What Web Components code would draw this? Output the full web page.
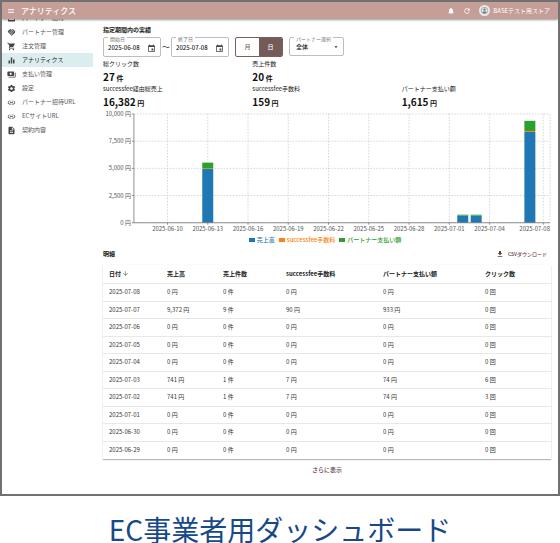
<!DOCTYPE html>
<html lang="ja">
<head>
<meta charset="utf-8">
<meta name="viewport" content="width=device-width, initial-scale=1">
<title>アナリティクス</title>
<style>
    body { margin: 0; background: #fff; color: #333; font-family: "Noto Sans CJK JP", "Noto Sans", sans-serif; font-size: 6px; line-height: 10px; }
</style>
</head>
<body>
<analytics-page></analytics-page>

<script>
const ICONS = {
    menu: '<path d="M3 18h18v-2H3v2zm0-5h18v-2H3v2zm0-7v2h18V6H3z"/>',
    bell: '<path d="M12 22c1.1 0 2-.9 2-2h-4c0 1.1.89 2 2 2zm6-6v-5c0-3.07-1.64-5.64-4.5-6.32V4c0-.83-.67-1.5-1.5-1.5s-1.5.67-1.5 1.5v.68C7.63 5.36 6 7.92 6 11v5l-2 2v1h16v-1l-2-2z"/>',
    refresh: '<path d="M17.65 6.35C16.2 4.9 14.21 4 12 4c-4.42 0-7.99 3.58-7.99 8s3.57 8 7.99 8c3.73 0 6.84-2.55 7.73-6h-2.08c-.82 2.33-3.04 4-5.65 4-3.31 0-6-2.69-6-6s2.69-6 6-6c1.66 0 3.14.69 4.22 1.78L13 11h7V4l-2.35 2.35z"/>',
    avatar: '<circle cx="12" cy="12" r="12" fill="#e9ebed"/><circle cx="12" cy="12" r="7" fill="none" stroke="#8b8e91" stroke-width="1.6"/><circle cx="12" cy="10" r="2.6" fill="#76797d"/><path d="M7.5 16.5c1-2.2 2.6-3 4.5-3s3.5.8 4.5 3c-2.5 2.4-6.5 2.4-9 0z" fill="#76797d"/>',
    invite: '<path d="M3 4h18v16H3z M5 6v10h14V6z" fill-rule="evenodd"/>',
    handshake: '<path d="M16.48 10.41c-.39.39-1.04.39-1.43 0l-4.47-4.46-7.05 7.04-.66-.63c-1.17-1.17-1.17-3.07 0-4.24l4.24-4.24c1.17-1.17 3.07-1.17 4.24 0L16.48 9c.39.39.39 1.02 0 1.41z M17.18 8.29c.78.78.78 2.05 0 2.83-1.27 1.27-2.61.22-2.83 0l-3.76-3.76-5.57 5.57c-.39.39-.39 1.02 0 1.41s1.02.39 1.42 0l4.62-4.62.71.71-4.62 4.62c-.39.39-.39 1.02 0 1.41s1.02.39 1.42 0l4.62-4.62.71.71-4.62 4.62c-.39.39-.39 1.02 0 1.41s1.02.39 1.41 0l4.62-4.62.71.71-4.62 4.62c-.39.39-.39 1.02 0 1.41s1.02.39 1.41 0l8.32-8.34c1.17-1.17 1.17-3.07 0-4.24l-4.24-4.24c-1.15-1.15-3.01-1.17-4.18-.06z"/>',
    cart: '<path d="M7 18c-1.1 0-1.99.9-1.99 2S5.9 22 7 22s2-.9 2-2-.9-2-2-2zM1 2v2h2l3.6 7.59-1.35 2.45c-.16.28-.25.61-.25.96 0 1.1.9 2 2 2h12v-2H7.42c-.14 0-.25-.11-.25-.25l.03-.12.9-1.63h7.45c.75 0 1.41-.41 1.75-1.03l3.58-6.49c.08-.14.12-.31.12-.48 0-.55-.45-1-1-1H5.21l-.94-2H1zm16 16c-1.1 0-1.99.9-1.99 2s.89 2 1.99 2 2-.9 2-2-.9-2-2-2z"/>',
    chart: '<path d="M10 20h4V4h-4v16zm-6 0h4v-8H4v8zM16 9v11h4V9h-4z"/>',
    payments: '<path d="M19 14V6c0-1.1-.9-2-2-2H3c-1.1 0-2 .9-2 2v8c0 1.1.9 2 2 2h14c1.1 0 2-.9 2-2zm-9-1c-1.66 0-3-1.34-3-3s1.34-3 3-3 3 1.34 3 3-1.34 3-3 3zm13-6v11c0 1.1-.9 2-2 2H4v-2h17V7h2z"/>',
    settings: '<path d="M19.14 12.94c.04-.3.06-.61.06-.94 0-.32-.02-.64-.07-.94l2.03-1.58c.18-.14.23-.41.12-.61l-1.92-3.32c-.12-.22-.37-.29-.59-.22l-2.39.96c-.5-.38-1.03-.7-1.62-.94l-.36-2.54c-.04-.24-.24-.41-.48-.41h-3.84c-.24 0-.43.17-.47.41l-.36 2.54c-.59.24-1.13.57-1.62.94l-2.39-.96c-.22-.08-.47 0-.59.22L2.74 8.87c-.12.21-.08.47.12.61l2.03 1.58c-.05.3-.09.63-.09.94s.02.64.07.94l-2.03 1.58c-.18.14-.23.41-.12.61l1.92 3.32c.12.22.37.29.59.22l2.39-.96c.5.38 1.03.7 1.62.94l.36 2.54c.05.24.24.41.48.41h3.84c.24 0 .44-.17.47-.41l.36-2.54c.59-.24 1.13-.56 1.62-.94l2.39.96c.22.08.47 0 .59-.22l1.92-3.32c.12-.22.07-.47-.12-.61l-2.01-1.58zM12 15.6c-1.98 0-3.6-1.62-3.6-3.6s1.62-3.6 3.6-3.6 3.6 1.62 3.6 3.6-1.62 3.6-3.6 3.6z"/>',
    link: '<path d="M3.9 12c0-1.71 1.39-3.1 3.1-3.1h4V7H7c-2.76 0-5 2.24-5 5s2.24 5 5 5h4v-1.9H7c-1.71 0-3.1-1.39-3.1-3.1zM8 13h8v-2H8v2zm9-6h-4v1.9h4c1.71 0 3.1 1.39 3.1 3.1s-1.39 3.1-3.1 3.1h-4V17h4c2.76 0 5-2.24 5-5s-2.24-5-5-5z"/>',
    document: '<path d="M14 2H6c-1.1 0-1.99.9-1.99 2L4 20c0 1.1.89 2 1.99 2H18c1.1 0 2-.9 2-2V8l-6-6zm2 16H8v-2h8v2zm0-4H8v-2h8v2zm-3-5V3.5L18.5 9H13z"/>',
    event: '<path d="M17 12h-5v5h5v-5zM16 1v2H8V1H6v2H5c-1.11 0-1.99.9-1.99 2L3 19c0 1.1.89 2 2 2h14c1.1 0 2-.9 2-2V5c0-1.1-.9-2-2-2h-1V1h-2zm3 18H5V8h14v11z"/>',
    dropdown: '<path d="M7 10l5 5 5-5z"/>',
    download: '<path d="M5 20h14v-2H5v2zM19 9h-4V3H9v6H5l7 7 7-7z"/>',
    arrowDown: '<path d="M20 12l-1.41-1.41L13 16.17V4h-2v12.17l-5.58-5.59L4 12l8 8 8-8z"/>'
};

class AppIcon extends HTMLElement {
    constructor() {
        super();
        this.attachShadow({ mode: 'open' });
    }

    connectedCallback() {
        this.shadowRoot.innerHTML = `
            <style>
                :host { display: block; flex: none; width: var(--icon-size, 8px); height: var(--icon-size, 8px); }
                svg { display: block; width: 100%; height: 100%; fill: currentColor; }
            </style>
            <svg viewBox="0 0 24 24" aria-hidden="true">${ICONS[this.getAttribute('name')]}</svg>
        `;
    }
}

class AppHeader extends HTMLElement {
    constructor() {
        super();
        this.attachShadow({ mode: 'open' });
        this.shadowRoot.innerHTML = `
            <style>
                :host { display: flex; align-items: center; height: 17px; padding: 0 8px 0 5px; background: #c49e97; color: #fff; box-shadow: 0 1px 2px #0006; position: relative; z-index: 1; }
                button { all: unset; display: flex; cursor: pointer; }
                h1 { flex: 1; margin: 0 0 0 6px; font-size: 8px; line-height: 12px; font-weight: 500; }
                .actions { display: flex; align-items: center; gap: 8px; }
                .account { gap: 3px; align-items: center; white-space: nowrap; }
                .account app-icon { --icon-size: 11px; }
            </style>
            <button aria-label="menu"><app-icon name="menu"></app-icon></button>
            <h1><slot name="title"></slot></h1>
            <div class="actions">
                <button aria-label="notifications"><app-icon name="bell"></app-icon></button>
                <button aria-label="refresh"><app-icon name="refresh"></app-icon></button>
                <button class="account"><app-icon name="avatar"></app-icon><slot name="account"></slot></button>
            </div>
        `;
    }
}

class NavItem extends HTMLElement {
    constructor() {
        super();
        this.attachShadow({ mode: 'open' });
    }

    connectedCallback() {
        this.shadowRoot.innerHTML = `
            <style>
                :host { display: block; color: #555; }
                :host([active]) { background: #dcedef; color: #222; }
                a { display: flex; align-items: center; gap: 6px; height: 14px; padding-left: 5px; color: inherit; text-decoration: none; }
                app-icon { --icon-size: 9px; color: #444; }
            </style>
            <a href="#"><app-icon name="${this.getAttribute('icon')}"></app-icon><slot></slot></a>
        `;
    }
}

class SideNav extends HTMLElement {
    constructor() {
        super();
        this.attachShadow({ mode: 'open' });
        // the list is scrolled a little, so its first entry runs under the header
        this.shadowRoot.innerHTML = `
            <style>
                :host { display: block; overflow: hidden; }
                nav { margin-top: -8px; }
            </style>
            <nav><slot></slot></nav>
        `;
    }
}

class DateField extends HTMLElement {
    constructor() {
        super();
        this.attachShadow({ mode: 'open' });
    }

    connectedCallback() {
        this.shadowRoot.innerHTML = `
            <style>
                :host { display: flex; align-items: center; position: relative; box-sizing: border-box; width: 58px; height: 20px; padding: 2px 4px 0 4px; border: 1px solid #bdbdbd; border-radius: 2px; }
                label { position: absolute; top: -3px; left: 4px; padding: 0 2px; background: #fff; color: #777; font-size: 5px; line-height: 8px; }
                input { all: unset; flex: 1; min-width: 0; height: 10px; color: #222; font-weight: 500; }
                button { all: unset; color: #444; cursor: pointer; }
                app-icon { --icon-size: 9px; }
            </style>
            <label for="date">${this.getAttribute('label')}</label>
            <input id="date" type="text" value="${this.getAttribute('value')}">
            <button aria-label="calendar"><app-icon name="event"></app-icon></button>
        `;
    }
}

class SelectField extends HTMLElement {
    constructor() {
        super();
        this.attachShadow({ mode: 'open' });
    }

    connectedCallback() {
        this.shadowRoot.innerHTML = `
            <style>
                :host { display: flex; align-items: center; position: relative; box-sizing: border-box; width: 55px; height: 19px; border: 1px solid #bdbdbd; border-radius: 2px; }
                label { position: absolute; top: -3px; left: 4px; padding: 0 2px; background: #fff; color: #777; font-size: 5px; line-height: 8px; white-space: nowrap; }
                select { all: unset; flex: 1; height: 10px; padding: 1px 0 0 6px; color: #222; font-size: 6px; line-height: 10px; font-weight: 500; }
                app-icon { position: absolute; right: 3px; top: 5px; pointer-events: none; }
            </style>
            <label for="choice">${this.getAttribute('label')}</label>
            <select id="choice"><option>${this.getAttribute('value')}</option></select>
            <app-icon name="dropdown"></app-icon>
        `;
    }
}

class PeriodToggle extends HTMLElement {
    constructor() {
        super();
        this.attachShadow({ mode: 'open' });
        this.shadowRoot.innerHTML = `
            <style>
                :host { display: flex; box-sizing: border-box; width: 48px; height: 20px; border: 1px solid #7a5f5b; border-radius: 2px; overflow: hidden; }
                button { all: unset; flex: 1; text-align: center; line-height: 18px; color: #7a5f5b; font-weight: 500; cursor: pointer; }
                button[aria-pressed="true"] { background: #755b57; color: #fff; }
            </style>
            <button aria-pressed="false">月</button>
            <button aria-pressed="true">日</button>
        `;
    }
}

class StatItem extends HTMLElement {
    constructor() {
        super();
        this.attachShadow({ mode: 'open' });
    }

    connectedCallback() {
        this.shadowRoot.innerHTML = `
            <style>
                :host { display: block; color: #222; white-space: nowrap; }
                .value { font-size: 10px; line-height: 15px; font-weight: 700; color: #111; }
                .unit { font-size: 7px; line-height: 1; }
            </style>
            <div><slot></slot></div>
            <div class="value">${this.getAttribute('value')}<span class="unit"> ${this.getAttribute('unit')}</span></div>
        `;
    }
}

class SalesChart extends HTMLElement {
    constructor() {
        super();
        this.attachShadow({ mode: 'open' });
        this.series = [
            { name: '売上高', color: '#1f77b4' },
            { name: 'successfee手数料', color: '#ff7f0e' },
            { name: 'パートナー支払い額', color: '#2ca02c' }
        ];
        this.days = 31;
        // day index counted from 2025-06-08
        this.data = [
            { day: 5, values: [4939, 55, 534] },
            { day: 24, values: [660, 7, 74] },
            { day: 25, values: [660, 7, 74] },
            { day: 29, values: [8349, 90, 933] }
        ];
        this.left = 31;
        this.right = 448;
        this.top = 5;
        this.bottom = 114;
        this.render();
    }

    x(day) {
        return this.left + (day + 0.5) * (this.right - this.left) / this.days;
    }

    y(value) {
        return this.bottom - value / 10000 * (this.bottom - this.top);
    }

    drawYAxis() {
        return [0, 2500, 5000, 7500, 10000].map(v => `
            <line class="grid" x1="${this.left}" x2="${this.right}" y1="${this.y(v)}" y2="${this.y(v)}"/>
            <line class="axis" x1="${this.left - 2}" x2="${this.left}" y1="${this.y(v)}" y2="${this.y(v)}"/>
            <text x="${this.left - 3}" y="${this.y(v) + 2}" text-anchor="end">${v.toLocaleString('en-US')} 円</text>`).join('');
    }

    drawXAxis() {
        return [2, 5, 8, 11, 14, 17, 20, 23, 26, 30].map(d => {
            const label = new Date(Date.UTC(2025, 5, 8 + d)).toISOString().slice(0, 10);
            const last = d === this.days - 1;
            return `
            <line class="grid" x1="${this.x(d)}" x2="${this.x(d)}" y1="${this.top}" y2="${this.bottom}"/>
            <line class="axis" x1="${this.x(d)}" x2="${this.x(d)}" y1="${this.bottom}" y2="${this.bottom + 2}"/>
            <text x="${last ? this.right : this.x(d)}" y="${this.bottom + 8}" text-anchor="${last ? 'end' : 'middle'}">${label}</text>`;
        }).join('');
    }

    drawBars() {
        return this.data.map(({ day, values }) => {
            let sum = 0;
            return values.map((v, i) => {
                const y = this.y(sum + v);
                const height = this.y(sum) - y;
                sum += v;
                return `<rect x="${this.x(day) - 5.5}" y="${y}" width="11" height="${height}" fill="${this.series[i].color}"/>`;
            }).join('');
        }).join('');
    }

    render() {
        this.shadowRoot.innerHTML = `
            <style>
                :host { display: block; }
                svg { display: block; width: 100%; }
                text { font-size: 6px; fill: #555; }
                .grid { stroke: #ccc; stroke-width: 0.8; stroke-dasharray: 1.5 1.5; }
                .axis { stroke: #777; stroke-width: 0.8; }
                ul { display: flex; justify-content: center; gap: 4px; margin: 0; padding: 0 4px 0 0; list-style: none; font-weight: 500; }
                li { display: flex; align-items: center; gap: 2px; }
                i { width: 6px; height: 4px; background: currentColor; }
            </style>
            <svg viewBox="0 0 449 126" role="img" aria-label="chart">
                ${this.drawYAxis()}
                ${this.drawXAxis()}
                <line class="grid" x1="${this.right}" x2="${this.right}" y1="${this.top}" y2="${this.bottom}"/>
                ${this.drawBars()}
                <path class="axis" fill="none" d="M${this.left} ${this.top}V${this.bottom}H${this.right}"/>
            </svg>
            <ul>${this.series.map(s => `<li style="color: ${s.color}"><i></i>${s.name}</li>`).join('')}</ul>
        `;
    }
}

class DetailTable extends HTMLElement {
    constructor() {
        super();
        this.attachShadow({ mode: 'open' });
        this.columns = [
            { name: '日付', width: 58 },
            { name: '売上高', width: 56, unit: '円' },
            { name: '売上件数', width: 63, unit: '件' },
            { name: 'successfee手数料', width: 97, unit: '円' },
            { name: 'パートナー支払い額', width: 102, unit: '円' },
            { name: 'クリック数', width: 73, unit: '回' }
        ];
        this.rows = [
            ['2025-07-08', '0', '0', '0', '0', '0'],
            ['2025-07-07', '9,372', '9', '90', '933', '0'],
            ['2025-07-06', '0', '0', '0', '0', '0'],
            ['2025-07-05', '0', '0', '0', '0', '0'],
            ['2025-07-04', '0', '0', '0', '0', '0'],
            ['2025-07-03', '741', '1', '7', '74', '6'],
            ['2025-07-02', '741', '1', '7', '74', '3'],
            ['2025-07-01', '0', '0', '0', '0', '0'],
            ['2025-06-30', '0', '0', '0', '0', '0'],
            ['2025-06-29', '0', '0', '0', '0', '0']
        ];
        this.render();
    }

    render() {
        this.shadowRoot.innerHTML = `
            <style>
                :host { display: block; box-shadow: 0 1px 1px #0004, 0 0 2px #0001; }
                table { width: 100%; table-layout: fixed; border-collapse: separate; border-spacing: 0; color: #333; font-size: 6px; line-height: 10px; }
                th, td { box-sizing: border-box; height: 18px; padding: 0 0 0 6px; text-align: left; white-space: nowrap; border-bottom: 1px solid #e8e8e8; }
                tr:nth-child(even) td { height: 17px; }
                th { height: 19px; font-weight: 700; color: #222; }
                tbody tr:last-child td { border-bottom: 0; }
                button { all: unset; display: flex; align-items: center; gap: 1px; cursor: pointer; }
                app-icon { --icon-size: 7px; color: #666; }
            </style>
            <table>
                <colgroup>${this.columns.map(c => `<col style="width: ${c.width}px">`).join('')}</colgroup>
                <thead><tr>${this.columns.map((c, i) => i === 0
                    ? `<th><button>${c.name}<app-icon name="arrowDown"></app-icon></button></th>`
                    : `<th>${c.name}</th>`).join('')}</tr></thead>
                <tbody>
                    ${this.rows.map(row => `<tr>${row.map((v, i) => `<td>${i ? `${v} ${this.columns[i].unit}` : v}</td>`).join('')}</tr>`).join('')}
                </tbody>
            </table>
        `;
    }
}

class AnalyticsPage extends HTMLElement {
    constructor() {
        super();
        this.attachShadow({ mode: 'open' });
        this.shadowRoot.innerHTML = `
            <style>
                :host { display: block; }
                .window { border: 2px solid #717171; overflow: hidden; }
                .body { display: grid; grid-template-columns: 91px 1fr; }
                main { min-width: 0; padding: 6px 7px 19px 10px; }
                h2 { margin: 0; font-size: 6px; line-height: 10px; font-weight: 700; color: #222; }
                .filters { display: flex; gap: 6px; margin: 2px 0; }
                .range { display: flex; align-items: center; gap: 1px; }
                .range span { width: 8px; text-align: center; font-size: 8px; }
                .stats { display: grid; grid-template-columns: repeat(3, 1fr); }
                .stats stat-item:nth-child(3) { grid-column: 1; }
                .detail { display: flex; justify-content: space-between; align-items: center; margin: 4px 0 6px; }
                .link { all: unset; display: flex; align-items: center; gap: 4px; line-height: 10px; font-weight: 500; color: #5d403c; cursor: pointer; }
                .detail .link { padding-right: 4px; font-size: 5px; }
                .more { margin: 6px auto 0; width: max-content; }
                .caption { margin: 0; padding-top: 18px; text-align: center; font-size: 28px; line-height: 30px; color: #17488a; }
            </style>
            <div class="window">
                <app-header>
                    <span slot="title">アナリティクス</span>
                    <span slot="account">BASEテスト用ストア</span>
                </app-header>
                <div class="body">
                    <side-nav>
                        <nav-item icon="invite">パートナー招待</nav-item>
                        <nav-item icon="handshake">パートナー管理</nav-item>
                        <nav-item icon="cart">注文管理</nav-item>
                        <nav-item icon="chart" active>アナリティクス</nav-item>
                        <nav-item icon="payments">支払い管理</nav-item>
                        <nav-item icon="settings">設定</nav-item>
                        <nav-item icon="link">パートナー招待URL</nav-item>
                        <nav-item icon="link">ECサイトURL</nav-item>
                        <nav-item icon="document">契約内容</nav-item>
                    </side-nav>
                    <main>
                        <h2>指定期間内の実績</h2>
                        <div class="filters">
                            <div class="range">
                                <date-field label="開始日" value="2025-06-08"></date-field>
                                <span>～</span>
                                <date-field label="終了日" value="2025-07-08"></date-field>
                            </div>
                            <period-toggle></period-toggle>
                            <select-field label="パートナー選択" value="全体"></select-field>
                        </div>
                        <div class="stats">
                            <stat-item value="27" unit="件">総クリック数</stat-item>
                            <stat-item value="20" unit="件">売上件数</stat-item>
                            <stat-item value="16,382" unit="円">successfee経由総売上</stat-item>
                            <stat-item value="159" unit="円">successfee手数料</stat-item>
                            <stat-item value="1,615" unit="円">パートナー支払い額</stat-item>
                        </div>
                        <sales-chart></sales-chart>
                        <div class="detail">
                            <h2>明細</h2>
                            <button class="link"><app-icon name="download"></app-icon>CSVダウンロード</button>
                        </div>
                        <detail-table></detail-table>
                        <button class="link more">さらに表示</button>
                    </main>
                </div>
            </div>
            <p class="caption">EC事業者用ダッシュボード</p>
        `;
    }
}

customElements.define('app-icon', AppIcon);
customElements.define('app-header', AppHeader);
customElements.define('nav-item', NavItem);
customElements.define('side-nav', SideNav);
customElements.define('date-field', DateField);
customElements.define('select-field', SelectField);
customElements.define('period-toggle', PeriodToggle);
customElements.define('stat-item', StatItem);
customElements.define('sales-chart', SalesChart);
customElements.define('detail-table', DetailTable);
customElements.define('analytics-page', AnalyticsPage);
</script>
</body>
</html>
